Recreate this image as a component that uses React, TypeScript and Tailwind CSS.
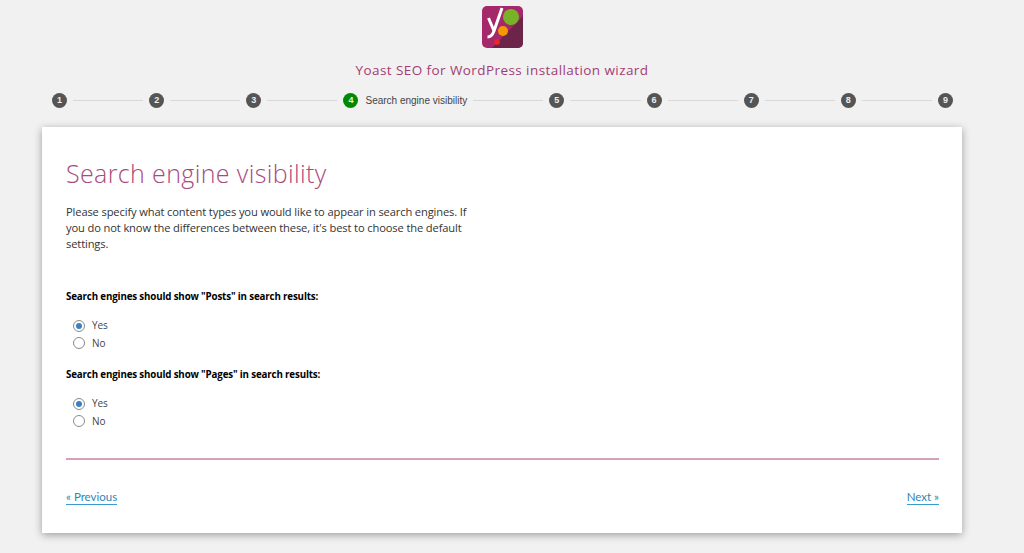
const FONT = "font-['Open_Sans','Noto_Sans',sans-serif]";

function Step({ n, active, label }: { n: number; active?: boolean; label?: string }) {
  return (
    <div className="flex shrink-0 items-center">
      <span
        className={`flex h-[15px] w-[15px] items-center justify-center rounded-full font-['Liberation_Sans',sans-serif] text-[9px] font-bold text-[#eeeeee] ${
          active ? 'bg-[#008a00]' : 'bg-[#555555]'
        }`}
      >
        {n}
      </span>
      {label && <span className="ml-[7px] font-['Liberation_Sans',sans-serif] text-[10px] text-[#444444]">{label}</span>}
    </div>
  );
}

function Line() {
  return <div className="mx-[6px] h-px flex-1 bg-[#d8d8d8]" />;
}

function Radio({ label, checked }: { label: string; checked?: boolean }) {
  return (
    <div className="flex h-[17.5px] items-center">
      <span className="flex h-[12px] w-[12px] items-center justify-center rounded-full border border-[#8a8a8a] bg-white">
        {checked && <span className="h-[6px] w-[6px] rounded-full bg-[#3b7fc4]" />}
      </span>
      <span className="ml-[7px] text-[10px] tracking-[-0.1px] text-[#444444]">{label}</span>
    </div>
  );
}

function Question({ type }: { type: string }) {
  return (
    <div>
      <p className="text-[9.75px] leading-[14px] font-bold tracking-[-0.15px] text-black">
        Search engines should show "{type}" in search results:
      </p>
      <div className="mt-[13px] ml-[7px]">
        <Radio label="Yes" checked />
        <Radio label="No" />
      </div>
    </div>
  );
}

function Logo() {
  return (
    <svg width="41" height="42" viewBox="0 0 41 42" className="block">
      <rect width="41" height="42" rx="5" fill="#a4286a" />
      <path d="M41 10 V37 a5 5 0 0 1 -5 5 H10 Z" fill="#6c2548" />
      <path d="M6.5 12 L12 25 M20 2 L12 25 C10.5 29 9 31 5.5 31" fill="none" stroke="#ffffff" strokeWidth="3" />
      <circle cx="29" cy="11" r="8" fill="#77b227" />
      <circle cx="21" cy="25" r="5" fill="#f49a00" />
      <circle cx="15" cy="36" r="3" fill="#e5262a" />
    </svg>
  );
}

export default function App() {
  return (
    <div className={`h-[553px] w-[1024px] overflow-hidden bg-[#f1f1f1] ${FONT}`}>
      <div className="flex w-[1004px] justify-center pt-[6px]">
        <Logo />
      </div>
      <h1 className="mt-[12px] w-[1004px] text-center text-[13.5px] leading-[20px] tracking-[0.42px] text-[#a23d72]">
        Yoast SEO for WordPress installation wizard
      </h1>

      <div className="mt-[13px] ml-[52px] flex h-[15px] w-[901px] items-center">
        <Step n={1} />
        <Line />
        <Step n={2} />
        <Line />
        <Step n={3} />
        <Line />
        <Step n={4} active label="Search engine visibility" />
        <Line />
        <Step n={5} />
        <Line />
        <Step n={6} />
        <Line />
        <Step n={7} />
        <Line />
        <Step n={8} />
        <Line />
        <Step n={9} />
      </div>

      <main className="mt-[19px] ml-[42px] h-[406px] w-[920px] bg-white pt-[30px] pr-[23px] pl-[24px] shadow-[0_2px_8px_rgba(0,0,0,0.35)]">
        <h2 className="text-[25px] leading-[32px] font-light tracking-[0.37px] text-[#a84a7d]">Search engine visibility</h2>
        <p className="mt-[15px] w-[410px] text-[11.15px] leading-[16px] tracking-[-0.13px] text-[#333333]">
          Please specify what content types you would like to appear in search engines. If you do not know the differences between these, it's best to choose the default settings.
        </p>
        <div className="mt-[38px]">
          <Question type="Posts" />
        </div>
        <div className="mt-[16px]">
          <Question type="Pages" />
        </div>
        <div className="mt-[28px] h-[2px] bg-[#d49fba]" />
        <div className="mt-[29px] flex justify-between font-['Lato',sans-serif] text-[11.5px] leading-[15px] text-[#2e86b8]">
          <a className="border-b border-[#3a9bd0]">« Previous</a>
          <a className="border-b border-[#3a9bd0]">Next »</a>
        </div>
      </main>
    </div>
  );
}
